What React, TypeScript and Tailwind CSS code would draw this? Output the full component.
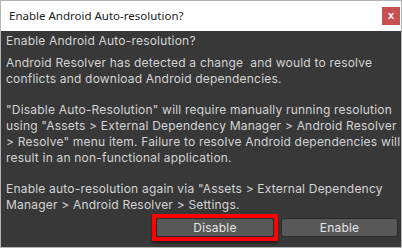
export default function App() {
  return (
    <div className="w-[402px] h-[248px] border border-[#b4b4b4] bg-[#383838] flex flex-col">
      {/* Title bar */}
      <div className="h-[30px] bg-white flex items-center justify-between pl-[8px] pr-[1px] shrink-0">
        <span
          className="text-[11.5px] text-[#1b1b1b]"
          style={{ fontFamily: '"Noto Sans", "Open Sans", sans-serif' }}
        >
          Enable Android Auto-resolution?
        </span>
        <button className="w-[18px] h-[18px] bg-[#c75050] flex items-center justify-center text-white text-[11px] font-bold leading-none pb-[2px] font-['Liberation_Sans',sans-serif]">
          x
        </button>
      </div>

      {/* Body */}
      <div className="flex-1 flex flex-col pl-[5px] pr-[3px] pt-[2px] pb-[6px] text-[12px] tracking-[0.2px] leading-[15.8px] text-[#d4d4d4] font-['Inter',sans-serif]">
        <p>Enable Android Auto-resolution?</p>
        <p className="mt-[6px] whitespace-pre">
          {"Android Resolver has detected a change  and would to resolve\nconflicts and download Android dependencies.\n\n\"Disable Auto-Resolution\" will require manually running resolution\nusing \"Assets > External Dependency Manager > Android Resolver\n> Resolve\" menu item. Failure to resolve Android dependencies will\nresult in an non-functional application.\n\nEnable auto-resolution again via \"Assets > External Dependency\nManager > Android Resolver > Settings."}
        </p>

        <div className="mt-auto flex items-center justify-end gap-[3px]">
          <div className="border-[4px] border-[#ff0000] shadow-[0_2px_2px_rgba(0,0,0,0.45)]">
            <button className="block w-[118px] h-[19px] rounded-[3px] border border-[#2a2a2a] bg-[#585858] text-[#e4e4e4] text-[12px] leading-none">
              Disable
            </button>
          </div>
          <button className="w-[117px] h-[19px] rounded-[3px] border border-[#2a2a2a] bg-[#585858] text-[#e4e4e4] text-[12px] leading-none">
            Enable
          </button>
        </div>
      </div>
    </div>
  );
}
